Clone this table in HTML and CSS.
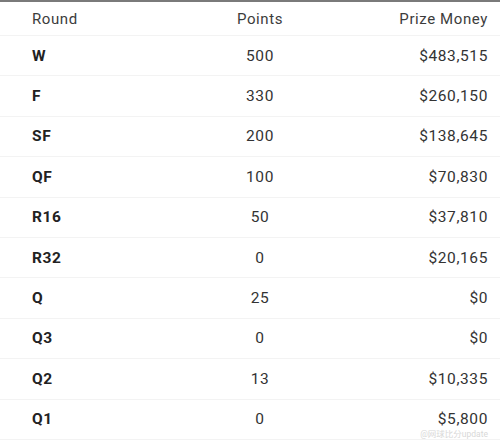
FILE: index.html
```html
<!DOCTYPE html>
<html>
<head>
<meta charset="utf-8">
<link rel="stylesheet" href="styles.css">
</head>
<body>
<div class="page">
  <div class="table">
    <div class="row head">
      <div class="c1">Round</div><div class="c2">Points</div><div class="c3">Prize Money</div>
    </div>
    <div class="row"><div class="c1 b">W</div><div class="c2">500</div><div class="c3">$483,515</div></div>
    <div class="row"><div class="c1 b">F</div><div class="c2">330</div><div class="c3">$260,150</div></div>
    <div class="row"><div class="c1 b">SF</div><div class="c2">200</div><div class="c3">$138,645</div></div>
    <div class="row"><div class="c1 b">QF</div><div class="c2">100</div><div class="c3">$70,830</div></div>
    <div class="row"><div class="c1 b">R16</div><div class="c2">50</div><div class="c3">$37,810</div></div>
    <div class="row"><div class="c1 b">R32</div><div class="c2">0</div><div class="c3">$20,165</div></div>
    <div class="row"><div class="c1 b">Q</div><div class="c2">25</div><div class="c3">$0</div></div>
    <div class="row"><div class="c1 b">Q3</div><div class="c2">0</div><div class="c3">$0</div></div>
    <div class="row"><div class="c1 b">Q2</div><div class="c2">13</div><div class="c3">$10,335</div></div>
    <div class="row"><div class="c1 b">Q1</div><div class="c2">0</div><div class="c3">$5,800</div></div>
  </div>
  <div class="watermark">@网球比分update</div>
</div>
</body>
</html>
```
FILE: styles.css
```css
html, body {
  margin: 0;
  padding: 0;
  background: #fff;
}
.page {
  position: relative;
  width: 500px;
  height: 440px;
  overflow: hidden;
  border-top: 2px solid #7a7a7a;
  box-sizing: border-box;
  font-family: Roboto, "Noto Sans CJK SC", sans-serif;
  font-size: 15.5px;
  letter-spacing: 0.6px;
  color: #333;
}
.table {
  display: flex;
  flex-direction: column;
}
.row {
  display: grid;
  grid-template-columns: 190px 140px 1fr;
  align-items: center;
  height: 40.4px;
  border-bottom: 1px solid #f3f3f3;
  box-sizing: border-box;
  line-height: 18px;
}
.row.head {
  height: 34px;
  color: #3c3c3c;
  font-size: 15px;
}
.c1 {
  padding-left: 32px;
}
.c2 {
  text-align: center;
}
.c3 {
  text-align: right;
  padding-right: 12px;
}
.b {
  font-weight: 700;
  color: #222;
}
.watermark {
  position: absolute;
  right: 12px;
  bottom: 1px;
  font-size: 8.5px;
  line-height: 9px;
  letter-spacing: 0;
  color: #d8d8d8;
}
```
